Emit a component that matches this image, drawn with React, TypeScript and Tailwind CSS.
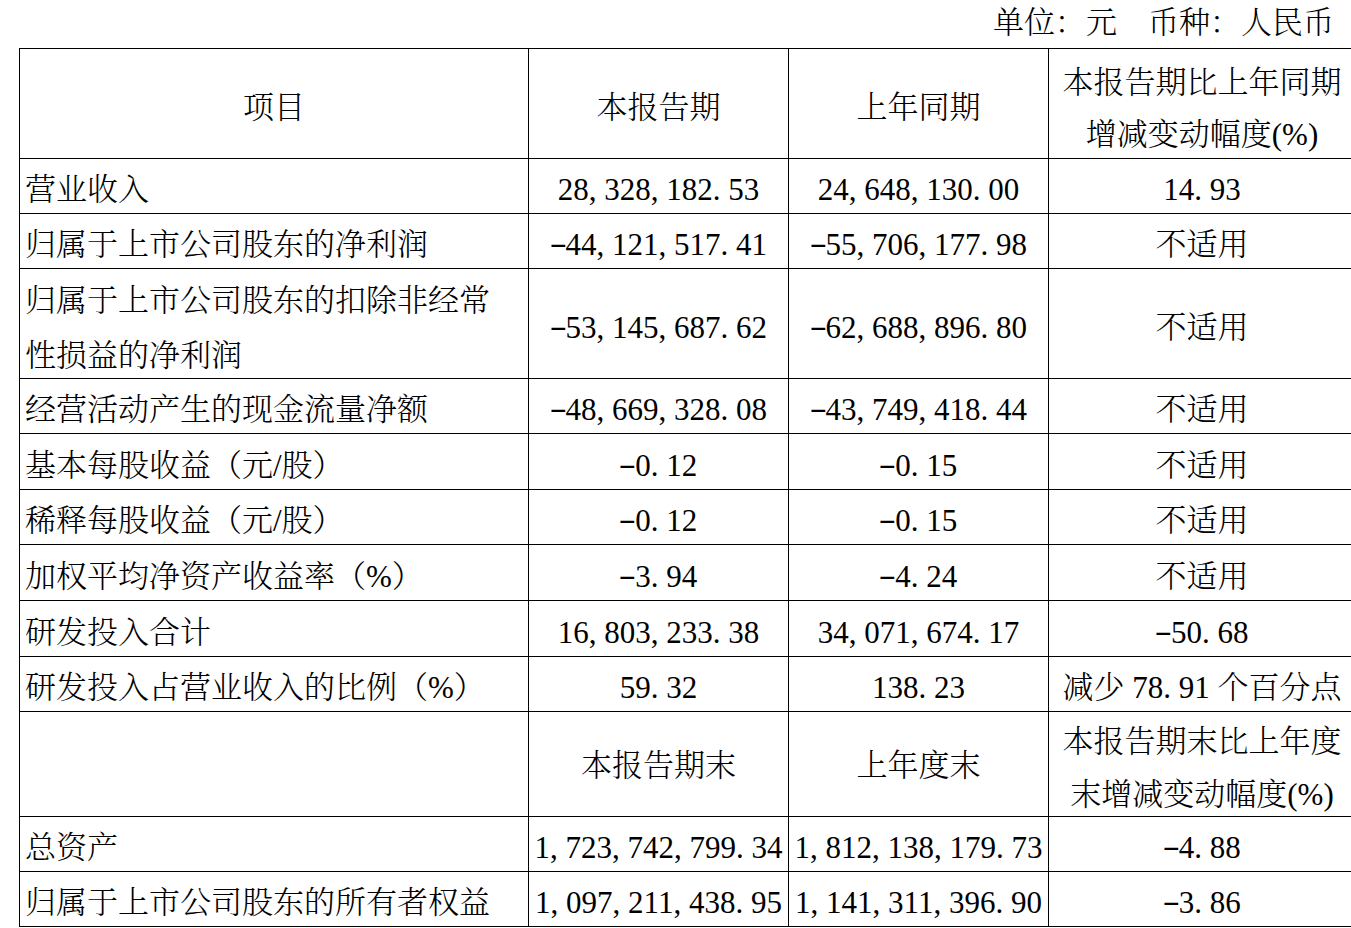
import React from "react";

function Num({ v }: { v: string }) {
  const parts: React.ReactNode[] = [];
  Array.from(v).forEach((c, i) => {
    if (c === "," || c === ".") {
      parts.push(
        <span key={i} className="inline-block w-[0.5em] text-left">
          {c}
        </span>
      );
    } else if (c === "-") {
      parts.push(
        <span key={i} className="inline-block w-[0.5em] text-center">
          <span className="inline-block scale-x-[1.7] -translate-y-[2px]">-</span>
        </span>
      );
    } else {
      parts.push(<React.Fragment key={i}>{c}</React.Fragment>);
    }
  });
  return <>{parts}</>;
}

type Row = { label: React.ReactNode; a: string; b: string; c: string; h: string };

const H54 = "h-[54px]";
const H55 = "h-[55px]";
const H109 = "h-[109px]";

const rows1: Row[] = [
  { label: "营业收入", a: "28,328,182.53", b: "24,648,130.00", c: "14.93", h: H54 },
  { label: "归属于上市公司股东的净利润", a: "-44,121,517.41", b: "-55,706,177.98", c: "不适用", h: H54 },
  {
    label: (
      <span className="block leading-[55px]">
        <span className="block whitespace-nowrap">归属于上市公司股东的扣除非经常</span>
        <span className="block">性损益的净利润</span>
      </span>
    ),
    a: "-53,145,687.62",
    b: "-62,688,896.80",
    c: "不适用",
    h: H109,
  },
  { label: "经营活动产生的现金流量净额", a: "-48,669,328.08", b: "-43,749,418.44", c: "不适用", h: H54 },
  { label: "基本每股收益（元/股）", a: "-0.12", b: "-0.15", c: "不适用", h: H55 },
  { label: "稀释每股收益（元/股）", a: "-0.12", b: "-0.15", c: "不适用", h: H54 },
  { label: "加权平均净资产收益率（%）", a: "-3.94", b: "-4.24", c: "不适用", h: H55 },
  { label: "研发投入合计", a: "16,803,233.38", b: "34,071,674.17", c: "-50.68", h: H55 },
  { label: "研发投入占营业收入的比例（%）", a: "59.32", b: "138.23", c: "减少 78.91 个百分点", h: H54 },
];

const rows2: Row[] = [
  { label: "总资产", a: "1,723,742,799.34", b: "1,812,138,179.73", c: "-4.88", h: H54 },
  { label: "归属于上市公司股东的所有者权益", a: "1,097,211,438.95", b: "1,141,311,396.90", c: "-3.86", h: H54 },
];

const td = "border border-black align-top p-0";

function DataRow({ r }: { r: Row }) {
  const h = r.h;
  return (
    <tr>
      <td className={td}>
        <div className={`${h} flex items-center justify-start pl-[5px] pt-[9px] whitespace-nowrap`}>{r.label}</div>
      </td>
      <td className={td}>
        <div className={`${h} flex items-center justify-center pt-[9px] whitespace-nowrap`}>
          <span>
            <Num v={r.a} />
          </span>
        </div>
      </td>
      <td className={td}>
        <div className={`${h} flex items-center justify-center pt-[9px] whitespace-nowrap`}>
          <span>
            <Num v={r.b} />
          </span>
        </div>
      </td>
      <td className={td}>
        <div className={`${h} flex items-center justify-center pt-[9px] whitespace-nowrap`}>
          <span>
            <Num v={r.c} />
          </span>
        </div>
      </td>
    </tr>
  );
}

export default function App() {
  return (
    <div className="w-[1351px] h-[928px] overflow-hidden bg-white text-black font-light text-[31px] font-['Liberation_Serif','Noto_Serif_CJK_SC','Noto_Sans_CJK_SC',serif]">
      <div className="h-[48px] flex justify-end items-start pr-[17px] leading-[46px]">
        <span>单位：元　币种：人民币</span>
      </div>
      <table className="ml-[19px] table-fixed border-collapse w-[1336px]">
        <colgroup>
          <col className="w-[509px]" />
          <col className="w-[260px]" />
          <col className="w-[260px]" />
          <col className="w-[307px]" />
        </colgroup>
        <tbody>
          <tr>
            <td className={td}>
              <div className="h-[109px] flex items-center justify-center pt-[10px]">项目</div>
            </td>
            <td className={td}>
              <div className="h-[109px] flex items-center justify-center pt-[10px]">本报告期</div>
            </td>
            <td className={td}>
              <div className="h-[109px] flex items-center justify-center pt-[10px]">上年同期</div>
            </td>
            <td className={td}>
              <div className="h-[109px] flex flex-col items-center justify-center pt-[11px] leading-[52px] whitespace-nowrap">
                <span>本报告期比上年同期</span>
                <span>增减变动幅度(%)</span>
              </div>
            </td>
          </tr>
          {rows1.map((r, i) => (
            <DataRow key={i} r={r} />
          ))}
          <tr>
            <td className={td}>
              <div className="h-[104px]"></div>
            </td>
            <td className={td}>
              <div className="h-[104px] flex items-center justify-center pt-[5px]">本报告期末</div>
            </td>
            <td className={td}>
              <div className="h-[104px] flex items-center justify-center pt-[5px]">上年度末</div>
            </td>
            <td className={td}>
              <div className="h-[104px] flex flex-col items-center justify-center pt-[7px] leading-[53px] whitespace-nowrap">
                <span>本报告期末比上年度</span>
                <span>末增减变动幅度(%)</span>
              </div>
            </td>
          </tr>
          {rows2.map((r, i) => (
            <DataRow key={i} r={r} />
          ))}
        </tbody>
      </table>
    </div>
  );
}
